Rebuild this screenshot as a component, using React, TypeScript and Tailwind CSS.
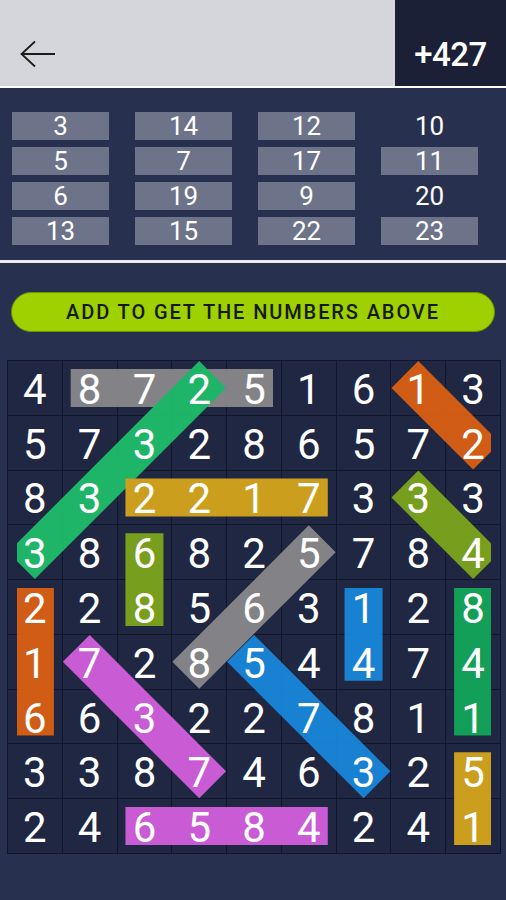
import React from 'react';

const targets: (number | null)[][] = [
  [3, 14, 12, 10],
  [5, 7, 17, 11],
  [6, 19, 9, 20],
  [13, 15, 22, 23],
];

const boxed = [
  [true, true, true, false],
  [true, true, true, true],
  [true, true, true, false],
  [true, true, true, true],
];

const board = [
  [4, 8, 7, 2, 5, 1, 6, 1, 3],
  [5, 7, 3, 2, 8, 6, 5, 7, 2],
  [8, 3, 2, 2, 1, 7, 3, 3, 3],
  [3, 8, 6, 8, 2, 5, 7, 8, 4],
  [2, 2, 8, 5, 6, 3, 1, 2, 8],
  [1, 7, 2, 8, 5, 4, 4, 7, 4],
  [6, 6, 3, 2, 2, 7, 8, 1, 1],
  [3, 3, 8, 7, 4, 6, 3, 2, 5],
  [2, 4, 6, 5, 8, 4, 2, 4, 1],
];

interface Bar {
  from: [number, number];
  to: [number, number];
  color: string;
}

// drawn in this order, later ones on top
const bars: Bar[] = [
  { from: [0, 1], to: [0, 4], color: '#8b8b8d' },
  { from: [3, 0], to: [0, 3], color: '#1fc06c' },
  { from: [2, 2], to: [2, 5], color: '#d9a91b' },
  { from: [3, 2], to: [4, 2], color: '#7fa71b' },
  { from: [0, 7], to: [1, 8], color: '#de6112' },
  { from: [2, 7], to: [3, 8], color: '#7fa71b' },
  { from: [4, 0], to: [6, 0], color: '#de6112' },
  { from: [4, 6], to: [5, 6], color: '#1888dd' },
  { from: [4, 8], to: [6, 8], color: '#14a95b' },
  { from: [5, 1], to: [7, 3], color: '#d660e1' },
  { from: [5, 4], to: [7, 6], color: '#1888dd' },
  { from: [3, 5], to: [5, 3], color: '#8b8b8d' },
  { from: [7, 8], to: [8, 8], color: '#d9a91b' },
  { from: [8, 2], to: [8, 5], color: '#d660e1' },
];

const SIZE = 494;
const CELL = (SIZE - 2 - 8) / 9;
const center = (i: number) => 1 + i * (CELL + 1) + CELL / 2;

export default function App() {
  return (
    <div
      className="w-[506px] h-[900px] overflow-hidden bg-[#27314f] text-white"
      style={{ fontFamily: 'Roboto, "Noto Sans", sans-serif' }}
    >
      <div className="h-[86px] flex">
        <div className="flex-1 bg-[#d5d6db] flex items-center pl-[20px] pt-[22px]">
          <svg width="36" height="28" viewBox="0 0 36 28" fill="none" stroke="#1d1d1d" strokeWidth="1.8">
            <path d="M35 14H2" />
            <path d="M15 1.5L1.5 14L15 26.5" />
          </svg>
        </div>
        <div className="w-[111px] bg-[#1b2036] flex items-center justify-center pt-[24px]">
          <span className="text-[33px] font-medium tracking-[-0.5px]">+427</span>
        </div>
      </div>
      <div className="h-[2px] bg-white" />

      <div className="pt-[24px] pb-[15px] pl-[12px] grid grid-cols-[repeat(4,97px)] gap-y-[7px] gap-x-[26px]">
        {targets.flatMap((row, r) =>
          row.map((n, c) => (
            <div
              key={`${r}-${c}`}
              className={`h-[28px] flex items-center justify-center text-[26px] leading-none ${
                boxed[r][c] ? 'bg-[#6d7389]' : ''
              }`}
            >
              {n}
            </div>
          ))
        )}
      </div>
      <div className="h-[3px] bg-[#e9ebf0]" />

      <div className="px-[11px] pt-[29px]">
        <div className="h-[40px] rounded-full bg-[#9fd000] border border-[#6f9200] flex items-center justify-center">
          <span className="text-[20px] font-medium text-[#14190a] tracking-[1.9px]">ADD TO GET THE NUMBERS ABOVE</span>
        </div>
      </div>

      <div className="pl-[7px] pt-[28px]">
        <div className="relative w-[494px] h-[494px] grid grid-cols-9 gap-px p-px bg-[#10152a]">
          {board.flatMap((row, r) =>
            row.map((n, c) => (
              <div key={`${r}-${c}`} className="bg-[#1f2742] flex items-center justify-center">
                <span className="relative z-20 text-[42px] leading-none pt-[4px]">{n}</span>
              </div>
            ))
          )}
          <svg className="absolute inset-0 z-10" width={SIZE} height={SIZE} viewBox={`0 0 ${SIZE} ${SIZE}`}>
            <defs>
              <clipPath id="inner">
                <rect x="10" y="0" width="474" height={SIZE} />
              </clipPath>
            </defs>
            <g clipPath="url(#inner)" opacity="0.93">
              {bars.map((b, i) => (
                <line
                  key={i}
                  x1={center(b.from[1])}
                  y1={center(b.from[0])}
                  x2={center(b.to[1])}
                  y2={center(b.to[0])}
                  stroke={b.color}
                  strokeWidth="38"
                  strokeLinecap="square"
                />
              ))}
            </g>
          </svg>
        </div>
      </div>
    </div>
  );
}
